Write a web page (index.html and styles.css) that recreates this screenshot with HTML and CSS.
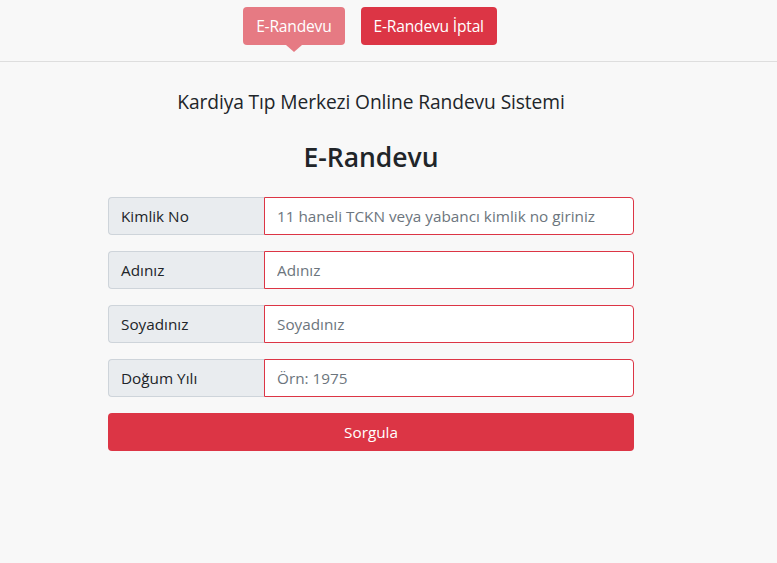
FILE: index.html
```html
<!DOCTYPE html>
<html lang="tr">
  <head>
    <meta charset="UTF-8" />
    <meta name="viewport" content="width=device-width, initial-scale=1.0" />
    <title>E-Randevu</title>
    <link rel="stylesheet" href="styles.css">
  </head>
  <body>
    <div class="topbar">
      <div class="tabs">
        <a class="tab active" href="#">E-Randevu</a>
        <a class="tab" href="#">E-Randevu İptal</a>
      </div>
    </div>

    <div class="content">
      <h5 class="subtitle">Kardiya Tıp Merkezi Online Randevu Sistemi</h5>
      <h3 class="title">E-Randevu</h3>

      <form class="form">
        <div class="input-group">
          <span class="input-label">Kimlik No</span>
          <input type="text" placeholder="11 haneli TCKN veya yabancı kimlik no giriniz" />
        </div>
        <div class="input-group">
          <span class="input-label">Adınız</span>
          <input type="text" placeholder="Adınız" />
        </div>
        <div class="input-group">
          <span class="input-label">Soyadınız</span>
          <input type="text" placeholder="Soyadınız" />
        </div>
        <div class="input-group">
          <span class="input-label">Doğum Yılı</span>
          <input type="text" placeholder="Örn: 1975" />
        </div>
        <button type="button" class="submit">Sorgula</button>
      </form>
    </div>
  </body>
</html>
```

FILE: styles.css
```css
body {
  margin: 0;
  background-color: #f8f8f8;
  font-family: "Open Sans", "Noto Sans", sans-serif;
  color: #212529;
  font-size: 15.3px;
}

.topbar {
  border-bottom: 1px solid #dedede;
  height: 62px;
  box-sizing: border-box;
}

.tabs {
  width: 742px;
  display: flex;
  justify-content: center;
  gap: 16px;
  padding-top: 7px;
}

.tab {
  position: relative;
  display: block;
  height: 38px;
  line-height: 38px;
  padding: 0 13px;
  border-radius: 4px;
  background-color: #dc3545;
  color: #fff;
  text-decoration: none;
  font-size: 15.6px;
  letter-spacing: -0.2px;
}

.tab.active {
  background-color: #e67a83;
  margin-left: -2px;
}

/* little arrow under the active tab */
.tab.active::after {
  content: "";
  position: absolute;
  left: 50%;
  bottom: -7px;
  margin-left: -8px;
  border-left: 8px solid transparent;
  border-right: 8px solid transparent;
  border-top: 7px solid #e67a83;
}

.content {
  width: 742px;
  display: flex;
  flex-direction: column;
  align-items: center;
}

.subtitle {
  margin: 27px 0 0;
  font-size: 19.2px;
  font-weight: 400;
  line-height: 26px;
  letter-spacing: -0.1px;
}

.title {
  margin: 24px 0 0;
  font-size: 26.5px;
  font-weight: 600;
  line-height: 36px;
}

.form {
  width: 526px;
  margin-top: 22px;
  display: flex;
  flex-direction: column;
  gap: 16px;
}

.input-group {
  display: flex;
  height: 38px;
}

.input-label {
  width: 156px;
  box-sizing: border-box;
  padding: 0 12px;
  line-height: 36px;
  background-color: #e9ecef;
  border: 1px solid #ced4da;
  border-right: none;
  border-radius: 4px 0 0 4px;
  color: #212529;
}

.input-group input {
  flex: 1;
  min-width: 0;
  box-sizing: border-box;
  margin: 0;
  padding: 0 12px;
  border: 1px solid #dc3545;
  border-radius: 0 4px 4px 0;
  background-color: #fff;
  font-family: inherit;
  font-size: 15.3px;
  color: #495057;
  outline: none;
}

.input-group input::placeholder {
  color: #6c757d;
}

.submit {
  height: 38px;
  border: none;
  border-radius: 4px;
  background-color: #dc3545;
  color: #fff;
  font-family: inherit;
  font-size: 15.3px;
  cursor: pointer;
}
```
